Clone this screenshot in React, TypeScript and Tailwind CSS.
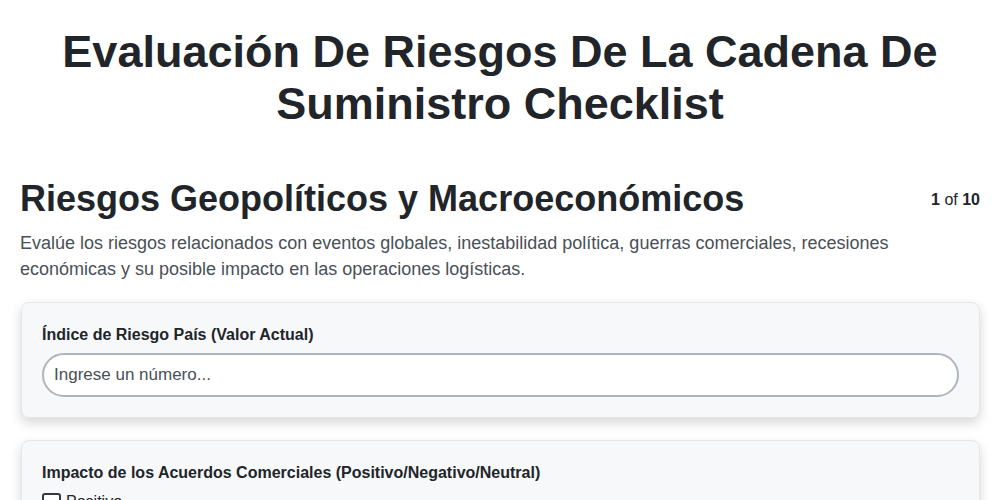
import React from "react";

export default function App() {
  return (
    <div
      className="min-h-screen bg-white text-[#212529]"
      style={{ fontFamily: '"Liberation Sans", Arial, sans-serif' }}
    >
      <div className="px-5">
        <h1 className="mt-[26px] text-center text-[45px] font-bold leading-[52px]">
          Evaluación De Riesgos De La Cadena De
          <br />
          Suministro Checklist
        </h1>

        <div className="mt-[49px] flex items-start justify-between">
          <h2 className="text-[36px] font-bold leading-[40px]">
            Riesgos Geopolíticos y Macroeconómicos
          </h2>
          <div className="mt-[9px] text-base leading-6">
            <span className="font-bold">1</span> of{" "}
            <span className="font-bold">10</span>
          </div>
        </div>
        <p className="mt-[11px] text-[18px] leading-[26px] text-[#495057]">
          Evalúe los riesgos relacionados con eventos globales, inestabilidad
          política, guerras comerciales, recesiones económicas y su posible
          impacto en las operaciones logísticas.
        </p>

        <div className="mt-5 flex flex-col gap-[22px] pl-px">
          <div className="rounded-lg border border-[#e5e7eb] bg-[#f7f8fa] p-5 shadow-[0_5px_12px_rgba(0,0,0,0.16)]">
            <label className="mb-[6px] block text-base font-bold leading-6">
              Índice de Riesgo País (Valor Actual)
            </label>
            <input
              type="text"
              placeholder="Ingrese un número..."
              className="block h-[44px] w-full rounded-full border-2 border-[#adb5bd] bg-white px-[10px] text-[17px] text-[#212529] outline-none placeholder:text-[#495057]"
            />
          </div>

          <div className="rounded-lg border border-[#e5e7eb] bg-[#f7f8fa] p-5 shadow-[0_5px_12px_rgba(0,0,0,0.16)]">
            <label className="mb-[5px] block text-base font-bold leading-6">
              Impacto de los Acuerdos Comerciales (Positivo/Negativo/Neutral)
            </label>
            <div className="flex flex-col gap-1">
              {["Positivo", "Negativo", "Neutral"].map((o) => (
                <label key={o} className="flex items-center gap-[5px] text-base leading-6">
                  <span className="inline-block h-[19px] w-[19px] rounded-[3px] border-2 border-[#343a40] bg-white" />
                  {o}
                </label>
              ))}
            </div>
          </div>
        </div>
      </div>
    </div>
  );
}
